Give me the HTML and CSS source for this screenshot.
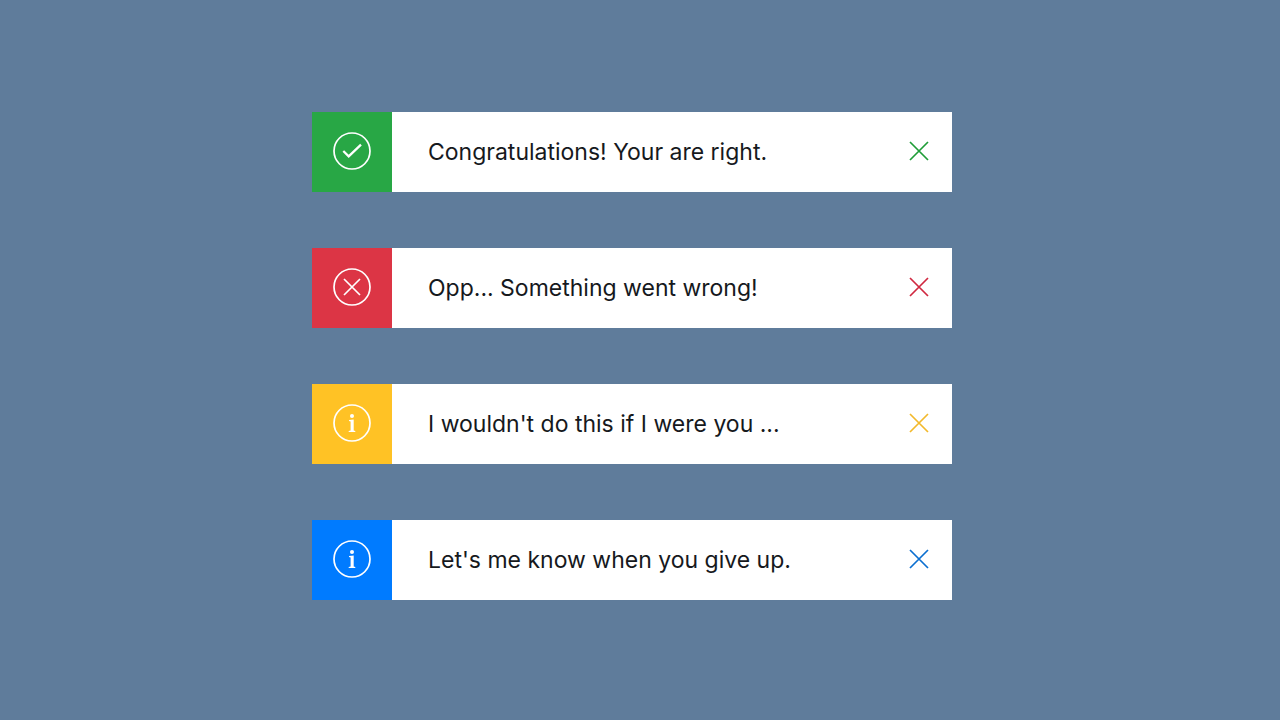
FILE: index.html
```html
<!DOCTYPE html>
<html lang="en">
<head>
<meta charset="utf-8">
<title>Alerts</title>
<link rel="stylesheet" href="styles.css">
</head>
<body>
<main class="alerts">
  <div class="alert success" role="alert">
    <div class="badge"><svg class="icon" viewBox="0 0 38 38"><circle cx="19" cy="19" r="18"/><path class="thick" d="M10.3 19l5.4 5.3L28 12.6"/></svg></div>
    <p class="message">Congratulations! Your are right.</p>
    <button class="close" type="button" aria-label="Close"><svg class="cross" viewBox="0 0 20 20"><path d="M1 1l18 18M19 1L1 19"/></svg></button>
  </div>
  <div class="alert danger" role="alert">
    <div class="badge"><svg class="icon" viewBox="0 0 38 38"><circle cx="19" cy="19" r="18"/><path d="M11 11l16 16M27 11L11 27"/></svg></div>
    <p class="message">Opp... Something went wrong!</p>
    <button class="close" type="button" aria-label="Close"><svg class="cross" viewBox="0 0 20 20"><path d="M1 1l18 18M19 1L1 19"/></svg></button>
  </div>
  <div class="alert warning" role="alert">
    <div class="badge"><svg class="icon" viewBox="0 0 38 38"><circle cx="19" cy="19" r="18"/><circle class="dot" cx="19" cy="12" r="2"/><path class="solid" d="M16 16.1l4.7-.6v11.1l1.6.5v1h-6.6v-1l1.9-.5v-9.1l-1.6-.4z"/></svg></div>
    <p class="message">I wouldn't do this if I were you ...</p>
    <button class="close" type="button" aria-label="Close"><svg class="cross" viewBox="0 0 20 20"><path d="M1 1l18 18M19 1L1 19"/></svg></button>
  </div>
  <div class="alert info" role="alert">
    <div class="badge"><svg class="icon" viewBox="0 0 38 38"><circle cx="19" cy="19" r="18"/><circle class="dot" cx="19" cy="12" r="2"/><path class="solid" d="M16 16.1l4.7-.6v11.1l1.6.5v1h-6.6v-1l1.9-.5v-9.1l-1.6-.4z"/></svg></div>
    <p class="message">Let's me know when you give up.</p>
    <button class="close" type="button" aria-label="Close"><svg class="cross" viewBox="0 0 20 20"><path d="M1 1l18 18M19 1L1 19"/></svg></button>
  </div>
</main>
</body>
</html>
```

FILE: styles.css
```css
* { box-sizing: border-box; }
body {
  margin: 0;
  min-height: 100vh;
  display: flex;
  justify-content: center;
  align-items: center;
  padding: 0 16px 8px 0;
  background: #5f7c9b;
  color: #16191d;
  font-family: Inter, "Liberation Sans", sans-serif;
}
.alerts {
  width: 100%;
  max-width: 640px;
  display: flex;
  flex-direction: column;
  gap: 56px;
}
.alert {
  display: flex;
  min-height: 80px;
  background: #fff;
}
.success { --tone: #28a745; --cross: #1f9d38; }
.danger { --tone: #dc3545; --cross: #d02840; }
.warning { --tone: #ffc225; --cross: #f3b92c; }
.info { --tone: #007bff; --cross: #0b6fd0; }
.badge {
  width: 80px;
  flex: none;
  display: grid;
  place-items: center;
  padding-bottom: 2px;
  background: var(--tone);
}
.icon {
  width: 38px;
  height: 38px;
  fill: none;
  stroke: #fff;
  stroke-width: 1.7;
}
.thick { stroke-width: 2.3; }
.dot, .solid { fill: #fff; stroke: none; }
.message {
  flex: 1;
  align-self: center;
  margin: 0;
  padding-left: 36px;
  font-size: 23px;
  line-height: 32px;
}
.close {
  width: 66px;
  display: grid;
  place-items: center;
  padding: 0 0 2px;
  border: 0;
  background: none;
  cursor: pointer;
}
.cross {
  width: 20px;
  height: 20px;
  fill: none;
  stroke: var(--cross);
  stroke-width: 1.7;
}
```
